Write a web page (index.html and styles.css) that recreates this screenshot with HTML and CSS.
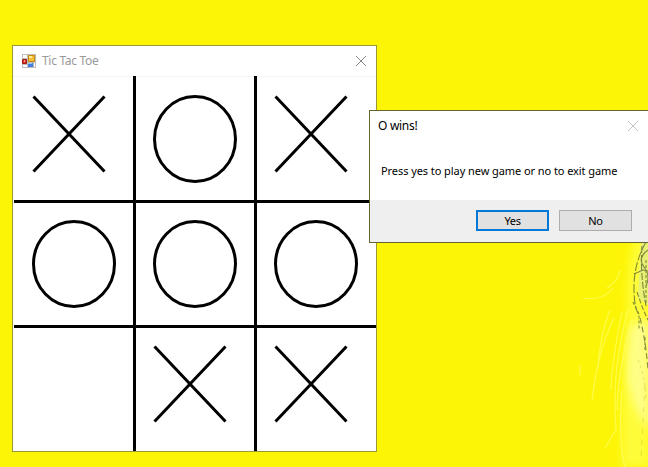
FILE: index.html
```html
<!DOCTYPE html>
<html lang="en">
<head>
<meta charset="utf-8">
<title>Tic Tac Toe</title>
<link rel="stylesheet" href="styles.css">
</head>
<body>
<main class="desktop">
  <svg class="wallpaper" width="648" height="467" viewBox="0 0 648 467" aria-hidden="true">
    <defs>
      <filter id="soft" x="-60%" y="-20%" width="220%" height="140%"><feGaussianBlur stdDeviation="4"/></filter>
      <filter id="fine" x="-20%" y="-20%" width="140%" height="140%"><feGaussianBlur stdDeviation=".6"/></filter>
    </defs>
    <path d="M634 240L650 240V467H622Q620 390 628 330Q624 280 634 240Z" fill="#ffff50" opacity=".7" filter="url(#soft)"/>
    <path d="M630 325Q626 350 627 380Q634 415 650 430V320Z" fill="#ffffa0" opacity=".75" filter="url(#soft)"/>
    <path d="M641 240H648V305L638 298Z" fill="#e0eb90" opacity=".7" filter="url(#fine)"/>
    <g fill="none" stroke="#ffff70" stroke-width="1.2" opacity=".65" filter="url(#fine)">
      <path d="M583 298Q604 301 613 288"/><path d="M610 310Q600 335 598 368"/>
      <path d="M614 318Q598 350 592 400"/><path d="M622 312Q612 360 611 390"/>
      <path d="M628 310Q611 370 616 430"/><path d="M632 320Q618 370 617 410"/>
      <path d="M580 365V375"/><path d="M620 270Q618 282 607 288"/>
      <path d="M616 430L605 448"/><path d="M622 390Q618 440 625 467"/>
    </g>
    <g fill="none" stroke="#59672c" stroke-width="1.1" opacity=".75" filter="url(#fine)">
      <path d="M646 242Q634 263 634 287T640 315" stroke-dasharray="9 2"/><path d="M642 246Q640 275 646 306" stroke-dasharray="7 2"/>
      <path d="M634 274L643 270L648 271"/><path d="M648 250Q637 258 644 267T646 286"/>
      <path d="M640 318Q646 342 648 370" stroke-dasharray="6 3"/><path d="M637 292L643 309L648 320" stroke-dasharray="5 2"/>
      <path d="M646 260V305M645 337V352" stroke-dasharray="3 2"/>
      <path d="M633 302L639 314L639 330" stroke-dasharray="3 2"/>
    </g>
    <g fill="none" stroke="#b9bd25" stroke-width="1" opacity=".4" filter="url(#fine)">
      <path d="M638 360Q645 376 646 400" stroke-dasharray="3 3"/><path d="M645 385L641 460" stroke-dasharray="5 6"/>
    </g>
  </svg>

  <section class="window game">
    <header class="titlebar">
      <svg class="app-icon" width="14" height="14" viewBox="0 0 14 14" aria-hidden="true">
        <path d="M0 0H14V14H0Z" fill="#bdbdbd"/>
        <path d="M1 1H5V4H1ZM1 11H5V13H1ZM12 9H13V13H12Z" fill="#fff"/>
        <path d="M6.500 1.500H12.500V7.500H6.500Z" fill="#f7bd39" stroke="#c78a08"/>
        <path d="M7 2H10V4H7Z" fill="#ffe796"/>
        <path d="M.5 5.500H4.500V9.500H.5Z" fill="#cf372a" stroke="#a71912"/>
        <path d="M2 6H3V8H2Z" fill="#f5a493"/>
        <path d="M6 9H11V13H6Z" fill="#447de0"/><path d="M6 9H10V10H6Z" fill="#9bc3fb"/>
      </svg>
      <h1 class="title">Tic Tac Toe</h1>
      <svg class="close" width="12" height="12" viewBox="0 0 12 12"><path d="M1 1L11 11M11 1L1 11"/></svg>
    </header>
    <div class="board">
      <svg class="cell" viewBox="0 0 121 125"><path d="M20.500 20.500L91.500 95.500M91.500 20.500L20.500 95.500"/></svg>
      <svg class="cell" viewBox="0 0 121 125"><ellipse cx="61" cy="63" rx="40.500" ry="42.500"/></svg>
      <svg class="cell" viewBox="0 0 121 125"><path d="M20.500 20.500L91.500 95.500M91.500 20.500L20.500 95.500"/></svg>
      <svg class="cell" viewBox="0 0 121 125"><ellipse cx="61" cy="63" rx="40.500" ry="42.500"/></svg>
      <svg class="cell" viewBox="0 0 121 125"><ellipse cx="61" cy="63" rx="40.500" ry="42.500"/></svg>
      <svg class="cell" viewBox="0 0 121 125"><ellipse cx="61" cy="63" rx="40.500" ry="42.500"/></svg>
      <svg class="cell" viewBox="0 0 121 125"></svg>
      <svg class="cell" viewBox="0 0 121 125"><path d="M20.500 20.500L91.500 95.500M91.500 20.500L20.500 95.500"/></svg>
      <svg class="cell" viewBox="0 0 121 125"><path d="M20.500 20.500L91.500 95.500M91.500 20.500L20.500 95.500"/></svg>
      <svg class="rules" viewBox="0 0 363 375"><path d="M120 0h3v375h-3zM241 0h3v375h-3zM1 124h362v3H1zM1 249h362v3H1z"/></svg>
    </div>
  </section>

  <section class="window dialog">
    <header class="dialog-title">
      <h2 class="heading">O wins!</h2>
      <svg class="close faint" width="12" height="12" viewBox="0 0 12 12"><path d="M1 1L11 11M11 1L1 11"/></svg>
    </header>
    <p class="message">Press yes to play new game or no to exit game</p>
    <footer class="actions">
      <button class="button primary">Yes</button>
      <button class="button">No</button>
    </footer>
  </section>
</main>
</body>
</html>
```
FILE: styles.css
```css
* { box-sizing: border-box; }
body { margin: 0; overflow: hidden; font-family: "Noto Sans", "Open Sans", sans-serif; }
.desktop { position: relative; width: 648px; height: 467px; overflow: hidden; background: #fdf506; }
.wallpaper { position: absolute; left: 0; top: 0; }
.window { position: absolute; background: #fff; }
.game { left: 12px; top: 45px; width: 365px; height: 407px; border: 1px solid #9c9838; }
.titlebar { display: flex; align-items: center; height: 30px; padding: 0 9px; }
.title { flex: 1; margin: 0 0 0 6px; font-size: 12px; line-height: 16px; letter-spacing: -.3px; font-weight: 400; color: #999; }
.close { fill: none; stroke: #888; stroke-width: 1; }
.faint { stroke: #c4c4c4; }
.board { position: relative; display: grid; grid-template-columns: repeat(3, 121px); grid-template-rows: repeat(3, 125px); }
.board::before { content: ""; position: absolute; left: 0; right: 0; top: 0; height: 1px; background: #f3f3f3; }
.cell { width: 121px; height: 125px; fill: none; stroke: #000; stroke-width: 3; }
.rules { position: absolute; left: 0; top: 0; width: 363px; height: 375px; fill: #000; }
.dialog { left: 369px; top: 110px; width: 290px; height: 133px; border: 1px solid #65652f; display: flex; flex-direction: column; }
.dialog-title { display: flex; align-items: center; justify-content: space-between; height: 29px; padding: 0 19px 0 8px; }
.heading { margin: 0; font-size: 12px; line-height: 16px; letter-spacing: -.3px; font-weight: 400; color: #000; }
.message { flex: 1; margin: 0; padding: 23px 0 0 11px; font-size: 11px; line-height: 16px; letter-spacing: -.07px; white-space: nowrap; color: #000; }
.actions { display: flex; gap: 10px; height: 42px; padding: 10px 0 0 106px; background: #efefef; }
.button { width: 73px; height: 21px; padding: 0; border: 1px solid #adadad; background: #e1e1e1; color: #000; font: 11px/17px "Noto Sans", "Open Sans", sans-serif; letter-spacing: -.3px; }
.primary { border: 2px solid #0078d7; }
```
